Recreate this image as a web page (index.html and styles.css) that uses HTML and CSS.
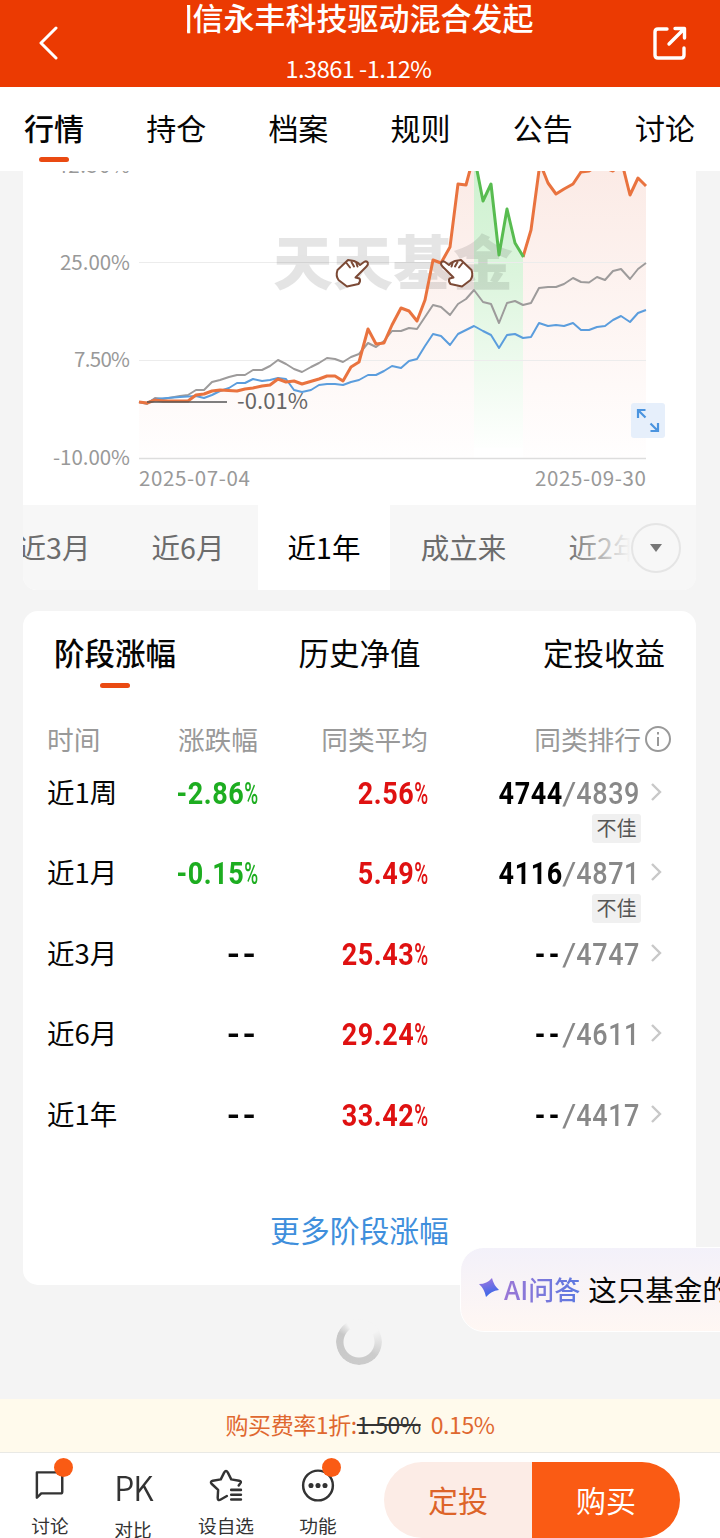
FILE: index.html
```html
<!DOCTYPE html>
<html lang="zh-CN">
<head>
<meta charset="utf-8">
<title>圆信永丰科技驱动混合发起</title>
<link rel="stylesheet" href="styles.css">
</head>
<body>
<div class="app">
  <header class="header">
    <svg class="back" width="20" height="34" viewBox="0 0 20 34"><path d="M18 2 L3 17 L18 32"/></svg>
    <div class="heading">
      <div class="title"><span>圆信永丰科技驱动混合发起</span></div>
      <div class="quote">1.3861 -1.12%</div>
    </div>
    <svg class="share" width="36" height="36" viewBox="0 0 36 36"><path d="M15 4 H6 Q3 4 3 7 V30 Q3 33 6 33 H29 Q32 33 32 30 V23 M17 19 L32 4 M23 3.5 H32.5 V13"/></svg>
  </header>

  <nav class="tabs">
    <span class="tab on">行情</span><span class="tab">持仓</span><span class="tab">档案</span><span class="tab">规则</span><span class="tab">公告</span><span class="tab">讨论</span>
  </nav>

  <section class="chart-card">
    <svg class="chart" width="673" height="334" viewBox="23 171 673 334">
      <defs>
        <linearGradient id="warm" x1="0" y1="160" x2="0" y2="458" gradientUnits="userSpaceOnUse"><stop offset="0" stop-color="#fbeae5"/><stop offset="1" stop-color="#fffefe"/></linearGradient>
        <linearGradient id="cool" x1="0" y1="160" x2="0" y2="448" gradientUnits="userSpaceOnUse"><stop offset="0" stop-color="#cdf1cf"/><stop offset=".4" stop-color="#dcf5dd"/><stop offset="1" stop-color="#fefffe"/></linearGradient>
      </defs>
      <path fill="url(#warm)" d="M139 402 L147 403 155 400 188 401 196 395 204 394 212 391 220 390 237 391 245 389 253 388 270 385 278 379 286 382 294 381 302 384 319 379 327 376 335 376 343 381 351 367 359 362 368 329 376 344 384 343 392 325 401 308 409 311 417 321 425 300 433 260 441 263 450 247 458 184 466 185 474 155 V458 H139Z"/>
      <path fill="url(#warm)" d="M523 257 L531 230 540 166 548 183 556 194 564 189 573 184 581 172 589 171 597 166 613 171 622 165 630 195 638 178 646 186 V458 H523Z"/>
      <path fill="url(#cool)" d="M474 155 L483 201 491 184 499 255 507 209 515 243 523 257 V448 H474Z"/>
      <path class="grid" d="M139 262.5 H646 M139 360.5 H646"/>
      <path class="axis" d="M139 458.5 H646"/>
      <text class="watermark" x="273" y="285" textLength="240" lengthAdjust="spacingAndGlyphs">天天基金</text>
      <polyline class="line avg" points="139,402 147,404 155,398 163,399 180,396 188,395 196,390 204,390 212,382 220,380 229,377 237,375 245,375 253,370 262,370 270,366 278,360 286,364 294,369 302,372 311,367 319,363 327,358 335,359 343,362 351,357 359,354 368,343 376,347 384,341 392,331 401,331 409,328 417,329 425,317 433,305 441,307 450,315 458,304 466,299 474,290 483,302 491,304 499,323 507,303 515,301 523,305 531,303 539,288 548,287 556,287 564,284 573,278 581,282 589,282.5 597,277 605,280 613,271 621,269 630,279 638,269 646,263"/>
      <polyline class="line index" points="139,402 147,403 155,399 180,397 196,396 204,398 212,395 220,391 229,388 237,383 245,383 253,379 262,381 270,380 278,378 286,379 294,390 302,392 311,390 319,385 327,384 335,384 343,385 351,382 359,380 368,375 376,375 384,371 392,366 401,368 409,361 417,359 425,346 433,334 441,336 450,345 458,334 466,330 474,326 483,331 491,335 499,348 507,335 515,334 523,338 531,337 539,323 548,326 556,325 564,326 573,323 581,330 589,330 597,327 605,326 613,320 621,316 630,322 638,313 646,310"/>
      <polyline class="line fund" points="139,402 147,403 155,400 163,401 188,401 196,395 204,394 212,391 220,390 237,391 245,389 253,388 262,386 270,385 278,379 286,382 294,381 302,384 319,379 327,376 335,376 343,381 351,367 359,362 368,329 376,344 384,343 392,325 401,308 409,311 417,321 425,300 433,260 441,263 450,247 458,184 466,185 474,155"/>
      <polyline class="line fund" points="523,257 531,230 540,163 548,183 556,194 564,189 573,184 581,172 589,171 597,166 605,168 613,171 622,163 630,195 638,178 646,186"/>
      <polyline class="line drop" points="474,155 483,201 491,184 499,255 507,209 515,243 523.500,257"/>
      <path class="lead" d="M147 402 H227"/>
      <text class="callout" x="237" y="409" textLength="71">-0.01%</text>
      <g class="ylabels">
        <text x="56" y="173" textLength="74">42.50%</text>
        <text x="60" y="270" textLength="70">25.00%</text>
        <text x="74" y="367" textLength="56">7.50%</text>
        <text x="53" y="465" textLength="77">-10.00%</text>
        <text x="139" y="486" textLength="111">2025-07-04</text>
        <text x="535" y="486" textLength="111">2025-09-30</text>
      </g>
      <g id="hand" class="hand"><path d="M348 260 L354 261 L358 263 L360 265 L364 262 Q366.500 260.500 367.800 262.500 Q368.500 264.500 366.500 266.500 L355.500 277.500 L359.500 278.500 Q361 281 358.500 284 L347 286.500 L338.500 280 Q335.500 276 337.500 270Z"/><path d="M346.500 263 L350 267.500 M351.500 262 L354 266.500 M356.500 263.500 L357.500 266.500"/></g>
      <use href="#hand" transform="matrix(-1 0 0 1 809 0)"/>
      <rect x="631" y="403" width="34" height="35" rx="3" fill="#e6effb"/>
      <path class="expand" d="M645.500 410 H638 V418 M638 410 L645.500 417.500 M658 423 V431 H650.500 M650.500 423.500 L658 431"/>
    </svg>
    <div class="ranges">
      <span class="range first">近3月</span><span class="range six">近6月</span><span class="range current">近1年</span><span class="range since">成立来</span><span class="range two">近2年</span>
      <div class="more-fade"><span class="more"><i></i></span></div>
    </div>
  </section>

  <section class="card">
    <div class="subtabs"><span class="subtab on">阶段涨幅</span><span class="subtab">历史净值</span><span class="subtab">定投收益</span></div>
    <div class="row head"><span>时间</span><span>涨跌幅</span><span>同类平均</span><span class="rank-head">同类排行<svg width="28" height="28" viewBox="0 0 28 28"><circle cx="14" cy="14" r="12"/><path d="M14 12 V21 M14 7 V9.500"/></svg></span></div>
    <div class="row"><span>近1周</span><span class="num down">-2.86<i>%</i></span><span class="num up">2.56<i>%</i></span><span class="num rank"><b>4744</b><em>/</em>4839</span><svg class="chev" width="12" height="20" viewBox="0 0 12 20"><path d="M2 2 L10 10 L2 18"/></svg><span class="tag">不佳</span></div>
    <div class="row"><span>近1月</span><span class="num down">-0.15<i>%</i></span><span class="num up">5.49<i>%</i></span><span class="num rank"><b>4116</b><em>/</em>4871</span><svg class="chev" width="12" height="20" viewBox="0 0 12 20"><path d="M2 2 L10 10 L2 18"/></svg><span class="tag">不佳</span></div>
    <div class="row"><span>近3月</span><span class="num none">--</span><span class="num up">25.43<i>%</i></span><span class="num rank"><b class="none">--</b><em>/</em>4747</span><svg class="chev" width="12" height="20" viewBox="0 0 12 20"><path d="M2 2 L10 10 L2 18"/></svg></div>
    <div class="row"><span>近6月</span><span class="num none">--</span><span class="num up">29.24<i>%</i></span><span class="num rank"><b class="none">--</b><em>/</em>4611</span><svg class="chev" width="12" height="20" viewBox="0 0 12 20"><path d="M2 2 L10 10 L2 18"/></svg></div>
    <div class="row"><span>近1年</span><span class="num none">--</span><span class="num up">33.42<i>%</i></span><span class="num rank"><b class="none">--</b><em>/</em>4417</span><svg class="chev" width="12" height="20" viewBox="0 0 12 20"><path d="M2 2 L10 10 L2 18"/></svg></div>
    <div class="all">更多阶段涨幅</div>
  </section>

  <div class="loading"><div class="spinner"></div></div>

  <div class="fee"><span>购买费率1折:</span><s>1.50%</s><span class="now">0.15%</span></div>

  <footer class="footer">
    <div class="tools">
      <div class="tool"><svg width="40" height="40" viewBox="0 0 40 40"><path d="M5 5 H32 Q34 5 34 7 V27 Q34 29 32 29 H10 L5 34Z"/></svg><span>讨论</span><i class="dot"></i></div>
      <div class="tool"><div class="pk">PK</div><span>对比</span></div>
      <div class="tool wide"><svg width="40" height="40" viewBox="0 0 40 40"><path d="M21 32 L14 36 Q10.500 38 10.500 34 L11 25 L3.500 18 Q1.500 15.500 5 14.500 L14 13 L18 5 Q20 2 22 5 L26 13 L35 14.500 Q38.500 15.500 36 18 L34.500 20"/><path class="bars" d="M26 25 H37 M26 30.500 H37 M26 36 H37"/></svg><span>设自选</span></div>
      <div class="tool"><svg width="40" height="40" viewBox="0 0 40 40"><circle cx="20" cy="20" r="17"/><g class="fill"><circle cx="12" cy="20" r="2.900"/><circle cx="20" cy="20" r="2.900"/><circle cx="28" cy="20" r="2.900"/></g></svg><span>功能</span><i class="dot"></i></div>
    </div>
    <div class="buttons"><span class="plan">定投</span><span class="buy">购买</span></div>
  </footer>

  <div class="ai">
    <svg width="20" height="20" viewBox="0 0 20 20"><defs><linearGradient id="spark" x1="0" y1="0" x2=".3" y2="1"><stop offset="0" stop-color="#a877df"/><stop offset="1" stop-color="#3b68e8"/></linearGradient></defs><path fill="url(#spark)" d="M13 0 Q14.500 7 20 12 Q12 13 7 19 Q5.500 11 0 6 Q8 6 13 0Z"/></svg>
    <strong>AI问答</strong><span>这只基金的</span>
  </div>
</div>
</body>
</html>
```
FILE: styles.css
```css
* { box-sizing: border-box; }
body { margin: 0; background: #f4f4f4; font-family: "Noto Sans CJK SC", sans-serif; color: #050505; }
.app { position: relative; width: 720px; height: 1538px; overflow: hidden; display: flex; flex-direction: column; }
.app > * { flex-shrink: 0; }
svg { display: block; fill: none; }
i, em { font-style: normal; }

.header { height: 87px; padding: 0 32px 2px 38px; background: #eb3a02; display: flex; align-items: center; justify-content: space-between; color: #fff; }
.back { stroke: #fff; stroke-width: 3; stroke-linecap: round; stroke-linejoin: round; }
.share { stroke: #fff; stroke-width: 3.4; stroke-linecap: round; stroke-linejoin: round; }
.heading { height: 85px; display: flex; flex-direction: column; align-items: center; padding-left: 10px; }
.title { width: 347px; height: 38px; overflow: hidden; display: flex; justify-content: flex-end; font-size: 31px; line-height: 34px; font-weight: 500; white-space: nowrap; }
.quote { font: 23.5px/34px "Noto Sans CJK SC", sans-serif; letter-spacing: -.5px; margin: 13px 3px 0 0; }

.tabs { height: 84px; background: #fff; padding: 0 25px 0 24px; display: flex; justify-content: space-between; font-size: 30px; line-height: 80px; }
.tab { position: relative; }
.on { font-weight: 500; }
.tab.on::after, .subtab.on::after { content: ""; position: absolute; left: 50%; bottom: 9px; width: 30px; height: 5px; margin-left: -15px; border-radius: 3px; background: #ea4a12; }

.chart-card { width: 673px; height: 419px; margin-left: 23px; background: #fff; border-radius: 0 0 14px 14px; overflow: hidden; }
.grid { stroke: #ececec; stroke-width: 1; }
.axis { stroke: #ddd; stroke-width: 1.5; }
.line { stroke-width: 2; stroke-linejoin: round; }
.avg { stroke: #9d9b9b; }
.index { stroke: #5b9ddd; }
.fund { stroke: #e9733f; stroke-width: 3; }
.drop { stroke: #58bc50; stroke-width: 3; }
.lead { stroke: #555; stroke-width: 1.6; }
.watermark { font-size: 59px; font-weight: 900; fill: #000; opacity: .1; }
.callout { font-size: 22px; fill: #666; }
.ylabels { font-size: 20.5px; fill: #999; }
.hand { fill: #fff; stroke: #7b4935; stroke-width: 2; stroke-linejoin: round; stroke-linecap: round; }
.expand { stroke: #4b94df; stroke-width: 2.2; }

.ranges { position: relative; height: 85px; background: #f7f7f7; display: flex; font-size: 28.5px; line-height: 84px; color: #6c6c6c; white-space: nowrap; }
.range { flex: none; text-align: center; }
.first { width: 93px; margin-left: -16px; padding-left: 1px; }
.six { width: 158px; padding-left: 18px; }
.current { width: 132px; background: #fff; color: #000; }
.since { width: 147px; }
.two { width: 120px; padding-left: 16px; }
.more-fade { position: absolute; right: 0; top: 0; width: 130px; height: 85px; padding-right: 15px; display: flex; align-items: center; justify-content: flex-end; background: linear-gradient(90deg, rgba(247,247,247,0), #f7f7f7 50%); }
.more { width: 50px; height: 50px; border: 2px solid #e5e5e5; border-radius: 50%; display: flex; align-items: center; justify-content: center; background: #f7f7f7; }
.more i { border: 6px solid transparent; border-top: 8px solid #777; border-bottom: 0; margin-top: 1px; }

.card { width: 673px; height: 674px; margin: 21px 0 0 23px; background: #fff; border-radius: 15px; }
.subtabs { height: 90px; padding: 0 31px; display: flex; justify-content: space-between; font-size: 30.5px; line-height: 82px; }
.subtab { position: relative; }
.subtab.on::after { bottom: 13px; }
.row { position: relative; height: 80.4px; padding: 0 24px; display: grid; grid-template-columns: 71px 140px 170px 212px 1fr; font-size: 27.5px; line-height: 42px; white-space: nowrap; }
.row > span:nth-child(n+2) { text-align: right; }
.row.head { height: 69px; font-size: 26.7px; color: #999; line-height: 75px; }
.row.head .rank-head { display: flex; justify-content: flex-end; align-items: center; height: 75px; gap: 3px; margin-right: -32px; }
.rank-head svg { stroke: #999; stroke-width: 2; }
.num { font-family: Roboto, sans-serif; font-size: 31.5px; font-weight: 700; letter-spacing: .7px; transform: scaleX(.856); transform-origin: right; line-height: 47px; }
.num i { display: inline-block; font-weight: 500; transform: scaleX(.7); transform-origin: left; margin-right: -8px; }
.down { color: #1dad20; }
.up { color: #df1111; }
.rank { color: #888; font-weight: 500; }
.rank b { color: #000; font-weight: 700; }
.rank em { display: inline-block; font-weight: 400; transform: scaleX(1.3); margin: 0 1px; }
.none { letter-spacing: 4px; }
.num.none { letter-spacing: 2px; transform: scaleX(1.08); }
.chev { margin: 12px 0 0 10px; stroke: #c8c8c8; stroke-width: 2.4; }
.row > .tag:last-child { position: absolute; right: 55px; top: 44px; width: 49px; height: 29px; border-radius: 3px; background: #f0f0f0; color: #555; font-size: 20px; line-height: 28px; text-align: center; }
.all { text-align: center; color: #3f8fdc; font-size: 29.8px; line-height: 44px; margin-top: 35px; }

.loading { height: 114px; display: flex; justify-content: center; padding: 34px 2px 0 0; }
.spinner { width: 46px; height: 46px; border-radius: 50%; background: conic-gradient(#f4f4f4 0 16%, #e4e4e4 24%, #ccc 36%, #c8c8c8 82%, #e2e2e2 88%, #f4f4f4 91%); -webkit-mask: radial-gradient(circle, transparent 15px, #000 16px); mask: radial-gradient(circle, transparent 15px, #000 16px); }

.fee { height: 54px; background: #fffaec; border-bottom: 1px solid #e9e9e5; display: flex; justify-content: center; font-size: 23px; line-height: 50px; letter-spacing: -.4px; color: #df6830; }
.fee s { color: #333; text-decoration-thickness: 2px; }
.fee .now { margin-left: 10px; }

.footer { height: 85px; background: #fff; display: flex; justify-content: space-between; padding: 9px 40px 0 30px; }
.tools { display: flex; color: #333; font-size: 18.7px; }
.tool { position: relative; width: 40px; display: flex; flex-direction: column; align-items: center; margin-right: 43px; white-space: nowrap; }
.tool svg { margin-top: 6px; height: 40px; stroke: #333; stroke-width: 2.8; stroke-linejoin: round; stroke-linecap: round; }
.tool .bars { stroke-width: 3; }
.pk { height: 40px; margin-top: 5px; font: 350 34px/40px "Noto Sans CJK SC", sans-serif; letter-spacing: -1px; transform: scaleX(.94); }
.tool span { line-height: 26px; margin-top: 9px; }
.fill { fill: #333; stroke: none; }
.wide { width: 56px; margin-left: 2px; margin-right: 44px; }
.dot { position: absolute; right: -3px; top: -4px; width: 19px; height: 19px; border-radius: 50%; background: #fa5b14; }
.buttons { display: flex; width: 296px; height: 76px; flex: none; border-radius: 38px; overflow: hidden; font-size: 30px; line-height: 74px; text-align: center; }
.plan { flex: 1; background: #fcece6; color: #dd6429; }
.buy { flex: 1; background: #fa5b14; color: #fff; }

.ai { position: absolute; left: 460px; top: 1247px; width: 280px; height: 85px; border: 1.5px solid #fff; border-radius: 24px 0 0 24px; background: linear-gradient(#f3f1fa, #fff7f3); padding: 0 0 3px 18px; display: flex; align-items: center; font-size: 28.5px; white-space: nowrap; }
.ai strong { margin: 0 8px 0 5px; font-size: 26px; font-weight: 500; color: transparent; background: linear-gradient(90deg, #9b77d6, #5b78e0); -webkit-background-clip: text; background-clip: text; }
```
